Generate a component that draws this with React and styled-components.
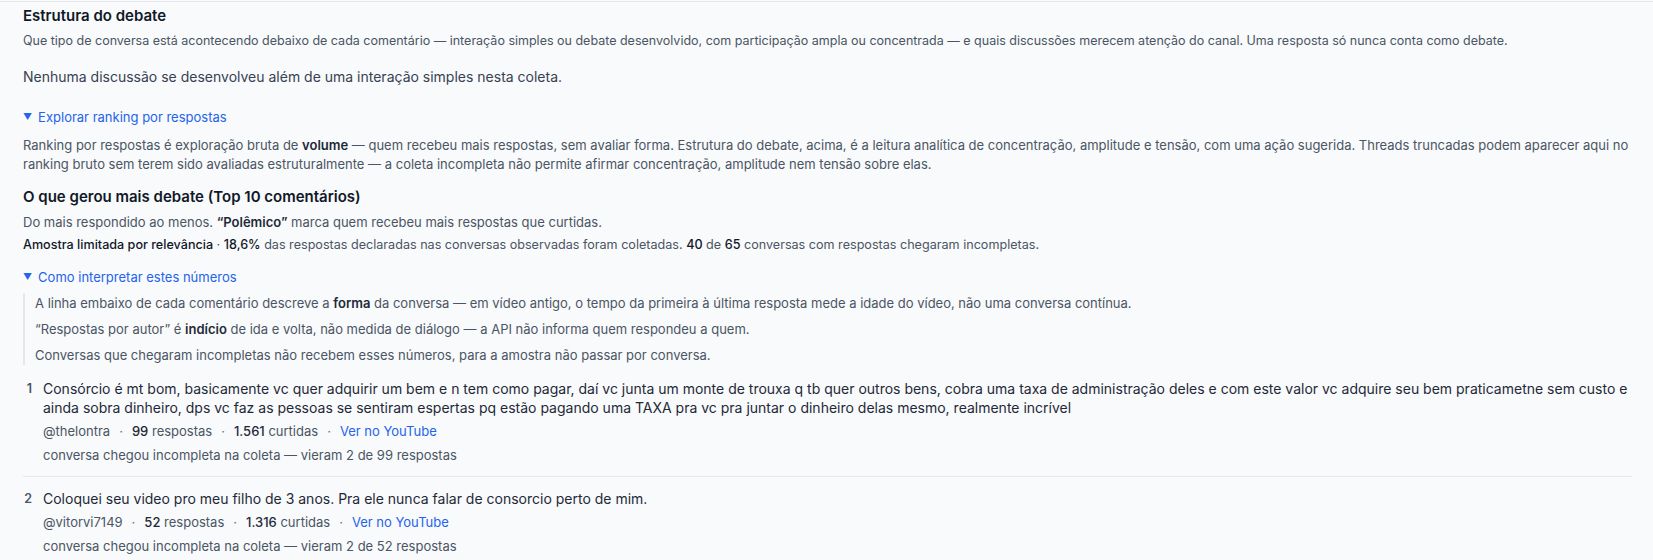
import React from 'react';
import styled, { createGlobalStyle } from 'styled-components';

const GlobalStyle = createGlobalStyle`
  html, body {
    margin: 0;
    padding: 0;
    background: #f8fafc;
  }
  body {
    font-family: Inter, "Noto Sans", "Liberation Sans", sans-serif;
    color: #1f2937;
    -webkit-font-smoothing: antialiased;
  }
`;

const comments = [
  {
    rank: 1,
    text: 'Consórcio é mt bom, basicamente vc quer adquirir um bem e n tem como pagar, daí vc junta um monte de trouxa q tb quer outros bens, cobra uma taxa de administração deles e com este valor vc adquire seu bem praticametne sem custo e ainda sobra dinheiro, dps vc faz as pessoas se sentiram espertas pq estão pagando uma TAXA pra vc pra juntar o dinheiro delas mesmo, realmente incrível',
    author: '@thelontra',
    replies: 99,
    likes: '1.561',
    got: 2,
  },
  {
    rank: 2,
    text: 'Coloquei seu video pro meu filho de 3 anos. Pra ele nunca falar de consorcio perto de mim.',
    author: '@vitorvi7149',
    replies: 52,
    likes: '1.316',
    got: 2,
  },
];

const App = () => {
  return (
    <>
      <GlobalStyle />
      <Page>
        <Section>
          <Heading>Estrutura do debate</Heading>
          <Lead>
            Que tipo de conversa está acontecendo debaixo de cada comentário — interação simples ou debate desenvolvido, com participação ampla ou concentrada — e quais discussões merecem atenção do canal. Uma resposta só nunca conta como debate.
          </Lead>
          <Empty>Nenhuma discussão se desenvolveu além de uma interação simples nesta coleta.</Empty>

          <Toggle $top={21}>
            <Caret>▼</Caret>Explorar ranking por respostas
          </Toggle>
          <Note>
            Ranking por respostas é exploração bruta de <b>volume</b> — quem recebeu mais respostas, sem avaliar forma. Estrutura do debate, acima, é a leitura analítica de concentração, amplitude e tensão, com uma ação sugerida. Threads truncadas podem aparecer aqui no ranking bruto sem terem sido avaliadas estruturalmente — a coleta incompleta não permite afirmar concentração, amplitude nem tensão sobre elas.
          </Note>

          <SubHeading>O que gerou mais debate (Top 10 comentários)</SubHeading>
          <Intro>
            Do mais respondido ao menos. <b>“Polêmico”</b> marca quem recebeu mais respostas que curtidas.
          </Intro>
          <Sample>
            <strong>Amostra limitada por relevância</strong> · <strong>18,6%</strong> das respostas declaradas nas conversas observadas foram coletadas. <strong>40</strong> de <strong>65</strong> conversas com respostas chegaram incompletas.
          </Sample>

          <Toggle $top={14}>
            <Caret>▼</Caret>Como interpretar estes números
          </Toggle>
          <Explain>
            <p>A linha embaixo de cada comentário descreve a <b>forma</b> da conversa — em vídeo antigo, o tempo da primeira à última resposta mede a idade do vídeo, não uma conversa contínua.</p>
            <p>“Respostas por autor” é <b>indício</b> de ida e volta, não medida de diálogo — a API não informa quem respondeu a quem.</p>
            <p>Conversas que chegaram incompletas não recebem esses números, para a amostra não passar por conversa.</p>
          </Explain>

          <List>
            {comments.map((c) => (
              <Item key={c.rank}>
                <Rank>{c.rank}</Rank>
                <Body>
                  <CommentText>{c.text}</CommentText>
                  <Meta>
                    <span>{c.author}</span>
                    <Dot>·</Dot>
                    <span><b>{c.replies}</b> respostas</span>
                    <Dot>·</Dot>
                    <span><b>{c.likes}</b> curtidas</span>
                    <Dot>·</Dot>
                    <Link href="#">Ver no YouTube</Link>
                  </Meta>
                  <Incomplete>
                    conversa chegou incompleta na coleta — vieram {c.got} de {c.replies} respostas
                  </Incomplete>
                </Body>
              </Item>
            ))}
          </List>
        </Section>
      </Page>
    </>
  );
};

// styled Components
const Page = styled.div`
  padding-top: 1px;
  min-height: 559px;
`;

const Section = styled.section`
  border-top: 1px solid #e5e7eb;
  padding: 4px 21px 0 23px;
`;

const Heading = styled.h2`
  margin: 0;
  font-size: 15px;
  line-height: 20px;
  font-weight: 600;
  color: #111827;
`;

const Lead = styled.p`
  margin: 6px 0 0;
  font-size: 12.5px;
  line-height: 18px;
  color: #4b5563;
`;

const Empty = styled.p`
  margin: 17px 0 0;
  font-size: 14px;
  line-height: 20px;
  color: #374151;
`;

const Toggle = styled.div`
  margin-top: ${(p) => p.$top}px;
  display: flex;
  align-items: center;
  font-size: 13px;
  line-height: 18px;
  color: #2563eb;
  cursor: pointer;
`;

const Caret = styled.span`
  font-size: 9px;
  margin-right: 6px;
`;

const Note = styled.p`
  margin: 10px 0 0;
  font-size: 13px;
  line-height: 19px;
  color: #4b5563;

  b {
    color: #1f2937;
    font-weight: 600;
  }
`;

const SubHeading = styled.h3`
  margin: 13px 0 0;
  font-size: 15px;
  line-height: 20px;
  font-weight: 600;
  color: #111827;
`;

const Intro = styled.p`
  margin: 6px 0 0;
  font-size: 13px;
  line-height: 18px;
  color: #4b5563;

  b {
    color: #1f2937;
    font-weight: 600;
  }
`;

const Sample = styled.p`
  margin: 5px 0 0;
  font-size: 12.6px;
  line-height: 18px;
  color: #4b5563;

  strong {
    color: #111827;
    font-weight: 500;
  }
`;

const Explain = styled.div`
  margin-top: 7px;
  border-left: 2px solid #e5e7eb;
  padding-left: 10px;
  display: flex;
  flex-direction: column;
  gap: 6px;

  p {
    margin: 0;
    font-size: 13px;
    line-height: 20px;
    color: #4b5563;
  }

  b {
    color: #1f2937;
    font-weight: 600;
  }
`;

const List = styled.ol`
  list-style: none;
  margin: 14px 0 0;
  padding: 0;
`;

const Item = styled.li`
  display: flex;
  gap: 11px;
  padding: 0 0 12px;

  & + & {
    border-top: 1px solid #e5e7eb;
    padding-top: 12px;
  }
`;

const Rank = styled.span`
  width: 9px;
  font-size: 12.5px;
  line-height: 19px;
  font-weight: 600;
  color: #4b5563;
  text-align: right;
`;

const Body = styled.div`
  flex: 1;
`;

const CommentText = styled.p`
  margin: 0;
  font-size: 14px;
  line-height: 19px;
  color: #1f2937;
`;

const Meta = styled.div`
  margin-top: 5px;
  font-size: 13px;
  line-height: 18px;
  color: #4b5563;

  b {
    color: #1f2937;
    font-weight: 500;
  }
`;

const Dot = styled.span`
  margin: 0 9px;
  color: #6b7280;
`;

const Link = styled.a`
  color: #2563eb;
  text-decoration: none;
`;

const Incomplete = styled.div`
  margin-top: 6px;
  font-size: 13px;
  line-height: 18px;
  color: #4b5563;
`;

export default App;
